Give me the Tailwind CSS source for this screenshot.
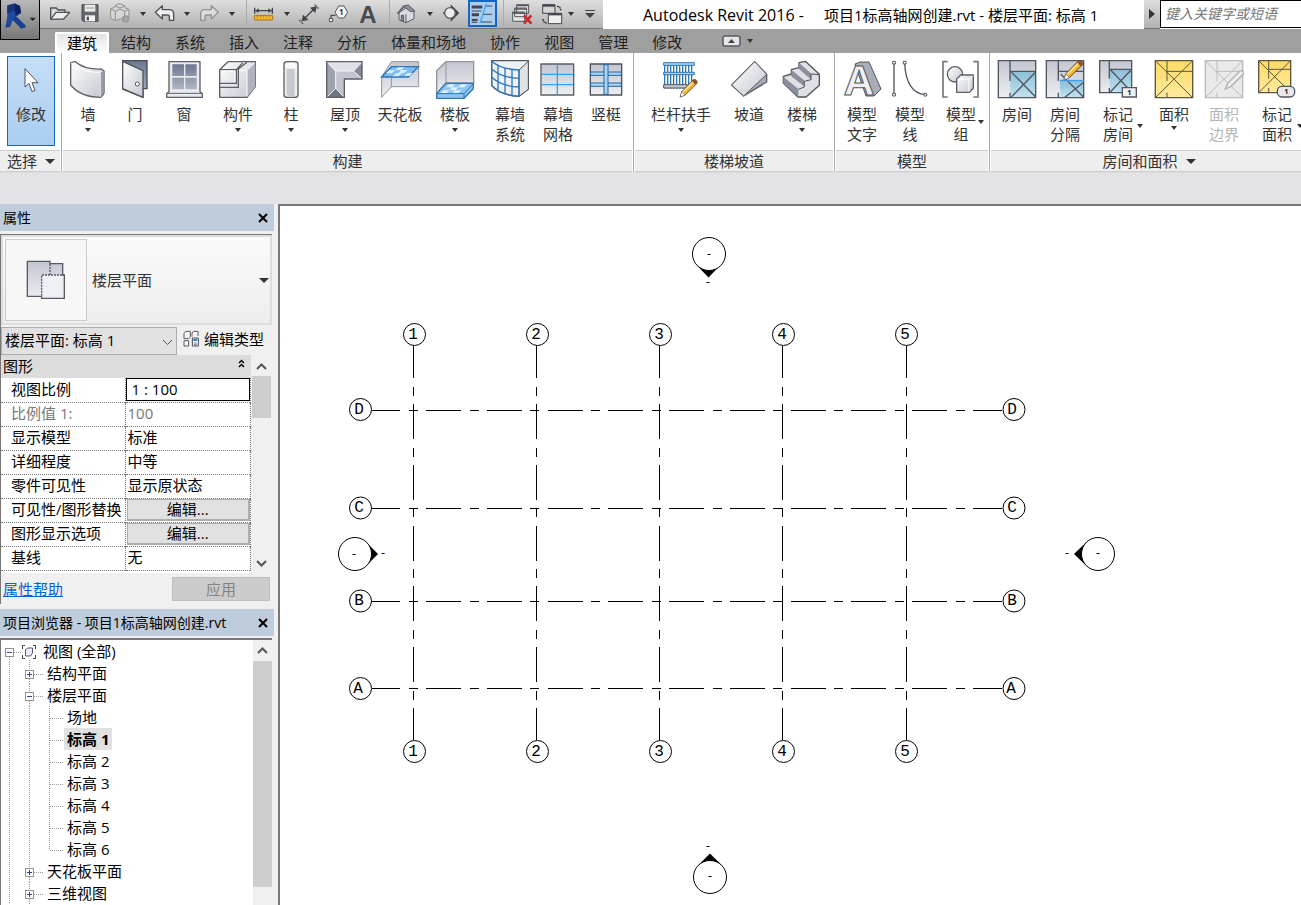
<!DOCTYPE html>
<html lang="zh-CN">

<head>
    <meta charset="UTF-8">
    <meta name="viewport" content="width=device-width, initial-scale=1.0">
    <title>Autodesk Revit 2016 - 项目1标高轴网创建.rvt</title>
    <script src="https://cdn.jsdelivr.net/npm/@tailwindcss/browser@4"></script>
</head>

<body class="flex h-screen flex-col overflow-hidden bg-[#f0f0f0] font-['Open_Sans','Noto_Sans_CJK_SC',sans-serif] text-[15px] leading-5 text-black">
    <!-- shared shapes -->
    <svg class="absolute h-0 w-0">
        <defs>
            <linearGradient id="g" x1="0" y1="0" x2="1" y2="1">
                <stop offset="0" stop-color="#ffffff" />
                <stop offset="1" stop-color="#c4c7d0" />
            </linearGradient>
            <linearGradient id="gd" x1="0" y1="0" x2="0" y2="1">
                <stop offset="0" stop-color="#c3c6d0" />
                <stop offset="1" stop-color="#eceef1" />
            </linearGradient>
            <linearGradient id="gw" x1="0" y1="0" x2="0" y2="1">
                <stop offset="0" stop-color="#6d788f" />
                <stop offset="1" stop-color="#b0b6c4" />
            </linearGradient>
            <linearGradient id="gb" x1="0" y1="0" x2="0" y2="1">
                <stop offset="0" stop-color="#8cbfd9" />
                <stop offset="1" stop-color="#c4e3f0" />
            </linearGradient>
            <linearGradient id="gy" x1="0" y1="0" x2="0" y2="1">
                <stop offset="0" stop-color="#ffdb62" />
                <stop offset="1" stop-color="#ffeaa0" />
            </linearGradient>
            <symbol id="pencil" viewBox="0 0 66 66">
                <path d="M4 62l5-18L46 6q6-5 11 1 6 5 1 11L20 55z" fill="#f5b32d" stroke="#5b4a35" stroke-width="3" />
                <path d="M13 46L48 11" stroke="#ffe58d" stroke-width="5" />
                <path d="M4 62l5-18 11 11z" fill="#fff" stroke="#60656d" stroke-width="2" />
                <path d="M43 9l11 12 5-4q4-6-2-11t-10-1z" fill="#8c5030" />
            </symbol>
            <symbol id="plus" viewBox="0 0 9 9">
                <rect x=".5" y=".5" width="8" height="8" fill="#fff" stroke="#919191" />
                <path d="M2 4.5h5M4.5 2v5" stroke="#2b4a9b" />
            </symbol>
            <symbol id="minus" viewBox="0 0 9 9">
                <rect x=".5" y=".5" width="8" height="8" fill="#fff" stroke="#919191" />
                <path d="M2 4.5h5" stroke="#2b4a9b" />
            </symbol>
            <symbol id="down" viewBox="0 0 6 4">
                <path d="M0 0h6L3 4z" fill="#333" />
            </symbol>
            <symbol id="down-lg" viewBox="0 0 10 5">
                <path d="M0 0h10L5 5z" fill="#333" />
            </symbol>
        </defs>
    </svg>

    <!-- title bar and tabs -->
    <header class="flex h-[53px] shrink-0 bg-[#9f9f9f]">
        <button class="flex h-10 w-10 shrink-0 items-center border border-t-0 border-black bg-linear-to-b from-[#b9b9b9] to-[#777]" aria-label="应用程序菜单">
            <svg class="h-10 w-10" viewBox="0 0 120 120">
                <path d="M20 14L43 8l17 8 3 22-16 12 30 27v6l-13 4-27-28-8 22-15 3 7-38-2-8z" fill="#1b3a86" />
                <path d="M20 14L43 8l2 22-22 8z" fill="#1a3577" />
                <path d="M43 8l17 8 3 22-18 8z" fill="#0c2160" />
                <path d="M23 38l22-8v18l-16 26-12 6z" fill="#214b9f" />
                <path d="M37 59l12-10 28 28v6l-13 4z" fill="#1d3f90" />
                <path d="M90 53h20l-10 10z" fill="#222" />
            </svg>
        </button>
        <div class="flex min-w-0 flex-1 flex-col">
            <div class="flex h-[29px] bg-white">
                <div class="flex h-[29px] w-[563px] shrink-0 border-b border-[#777] bg-linear-to-b from-[#dedede] to-[#b2b2b2] pl-[5px]">
                    <button aria-label="打开"><svg class="h-7 w-[30px]" viewBox="135 0 90 84">
                            <path d="M152 57V24h17l5 6h21v10" fill="#ddd" stroke="#4d5159" stroke-width="4" />
                            <path d="M152 58l16-21h41l-18 20z" fill="#eee" stroke="#4d5159" stroke-width="4" stroke-linejoin="round" />
                        </svg></button>
                    <button aria-label="保存"><svg class="h-7 w-[30px]" viewBox="225 0 90 84">
                            <path d="M246 14h48v50h-44l-4-4z" fill="#636770" stroke="#484b52" stroke-width="3" />
                            <path d="M254 14h32v21h-32z" fill="#e9e9e9" />
                            <path d="M258 24h24" stroke="#777" stroke-width="2" />
                            <path d="M255 46h30v18h-30z" fill="#f1f1f1" />
                            <path d="M260 50h7v11h-7z" fill="#50535b" />
                        </svg></button>
                    <button aria-label="同步"><svg class="h-7 w-8" viewBox="315 0 96 84">
                            <path d="M332 27l12-6 3-6 12-4 14 5 2 7 12 6v24l-12 8-14-5-14 6-15-8z" fill="#d5d5d5" stroke="#909090" stroke-width="3" />
                            <path d="M332 27l14 7 14-7 14 7 13-6M346 34v26M374 34v20M346 18l14 6 14-6" fill="none" stroke="#909090" stroke-width="3" />
                            <circle cx="377" cy="57" r="11" fill="#979797" />
                            <path d="M368 57h18M377 48v18" stroke="#bbb" stroke-width="2" />
                        </svg></button>
                    <button class="flex w-3 items-center justify-center" aria-label="同步选项"><svg class="h-1 w-1.5"><use href="#down" /></svg></button>
                    <button aria-label="放弃"><svg class="h-7 w-8" viewBox="447 0 96 84">
                            <path d="M466 37l21-20v12h23q11 1 11 13v19h-13V50q0-5-6-5h-15v12z" fill="#eee" stroke="#4e525a" stroke-width="4" stroke-linejoin="round" />
                        </svg></button>
                    <button class="flex w-3 items-center justify-center" aria-label="放弃选项"><svg class="h-1 w-1.5"><use href="#down" /></svg></button>
                    <button aria-label="重做"><svg class="h-7 w-[33px]" viewBox="579 0 99 84">
                            <path d="M655 37l-21-20v12h-21q-11 1-11 13v19h13V50q0-5 6-5h13v12z" fill="#ddd" stroke="#929292" stroke-width="4" stroke-linejoin="round" />
                        </svg></button>
                    <button class="flex w-3 items-center justify-center" aria-label="重做选项"><svg class="h-1 w-1.5"><use href="#down" /></svg></button>
                    <div class="ml-2 h-[26px] w-px bg-[#aaa]"></div>
                    <button aria-label="测量"><svg class="h-7 w-8" viewBox="741 0 96 84">
                            <path d="M764 23v18M817 23v18M767 32h47" stroke="#3e424a" stroke-width="4" />
                            <path d="M766 32l10-7v14zM815 32l-10-7v14z" fill="#3e424a" />
                            <rect x="763" y="46" width="55" height="14" rx="2" fill="#f3b62d" stroke="#a5741c" stroke-width="3" />
                            <path d="M772 47v6M781 47v6M790 47v6M799 47v6M808 47v6" stroke="#a5741c" stroke-width="2" />
                        </svg></button>
                    <button class="flex w-4 items-center justify-center" aria-label="测量选项"><svg class="h-1 w-1.5"><use href="#down" /></svg></button>
                    <button aria-label="对齐尺寸标注"><svg class="h-7 w-7" viewBox="885 0 84 84">
                            <path d="M910 59l34-34" stroke="#3e424a" stroke-width="4" />
                            <path d="M905 64l4-20 16 16zM950 19l-4 20-16-16z" fill="#3e424a" />
                            <path d="M898 60l11 11M944 14l13 13" stroke="#3e424a" stroke-width="4" stroke-dasharray="4 2" />
                        </svg></button>
                    <button aria-label="按类别标记"><svg class="h-7 w-[31px]" viewBox="-6 0 93 84">
                            <path d="M18 60V46h14" fill="none" stroke="#50545c" stroke-width="4" />
                            <path d="M13 55h10v10H13z" fill="#eee" stroke="#50545c" stroke-width="3" />
                            <path d="M41 18h16l11 19-11 17H41L30 37z" fill="#f2f2f2" stroke="#50545c" stroke-width="3" />
                            <text x="49" y="45" text-anchor="middle" font-size="24" font-weight="700" fill="#333">1</text>
                        </svg></button>
                    <button class="w-[29px]" aria-label="文字"><svg class="h-7 w-[29px]" viewBox="0 0 29 28">
                            <text x="14" y="23" text-anchor="middle" font-family="Liberation Sans" font-size="24" font-weight="700" fill="#484b50">A</text>
                        </svg></button>
                    <div class="ml-1.5 h-[26px] w-px bg-[#aaa]"></div>
                    <button class="ml-0.5" aria-label="默认三维视图"><svg class="h-7 w-8" viewBox="201 0 96 84">
                            <path d="M225 38v21l21 9 24-12V35l-16-17z" fill="#d9dce2" stroke="#555961" stroke-width="3" />
                            <path d="M220 40l18-22 15-3 20 18-13 2-20-15-15 20z" fill="#8d929c" stroke="#555961" stroke-width="3" stroke-linejoin="round" />
                            <path d="M246 43v25M232 46h7v17h-7z" fill="#888" stroke="#555961" stroke-width="3" />
                        </svg></button>
                    <button class="flex w-3.5 items-center justify-center" aria-label="三维视图选项"><svg class="h-1 w-1.5"><use href="#down" /></svg></button>
                    <button aria-label="剖面"><svg class="h-7 w-7" viewBox="339 0 84 84">
                            <path d="M380 13l26 26-26 26z" fill="#43464d" />
                            <circle cx="378" cy="39" r="16" fill="#ececef" stroke="#555961" stroke-width="4" />
                            <path d="M357 39h6" stroke="#555961" stroke-width="4" />
                        </svg></button>
                    <button class="ml-[3px] h-[27px] w-[29px] border-2 border-[#1467bd] bg-[#aacdf0]" aria-label="细线"><svg class="h-[23px] w-[25px]" viewBox="438 6 75 69">
                            <path d="M443 21h32M443 44h22" stroke="#44474e" stroke-width="9" />
                            <path d="M443 33h29M443 67h17M484 18h20M478 43h26M471 66h33" stroke="#44474e" stroke-width="3" />
                            <path d="M443 60h18" stroke="#44474e" stroke-width="7" />
                            <path d="M487 12l-19 57" stroke="#3fa5f5" stroke-width="4" />
                        </svg></button>
                    <div class="ml-1.5 h-[26px] w-px bg-[#aaa]"></div>
                    <button class="ml-px" aria-label="关闭隐藏窗口"><svg class="h-7 w-8" viewBox="540 0 96 84">
                            <path d="M575 14h36v26h-36zM569 24h36v26h-36zM563 36h36v28h-36z" fill="#e5e5e5" stroke="#54575f" stroke-width="3" />
                            <path d="M563 39h36M569 27h36M575 17h36" stroke="#54575f" stroke-width="4" />
                            <path d="M597 46l22 25M619 46l-22 25" stroke="#ce2b31" stroke-width="8" />
                        </svg></button>
                    <button aria-label="切换窗口"><svg class="h-7 w-7" viewBox="636 0 84 84">
                            <path d="M653 14h37v26h-37z" fill="#d5d5d5" stroke="#44474e" stroke-width="3" />
                            <path d="M653 17h37" stroke="#44474e" stroke-width="6" />
                            <path d="M670 40h40v31h-40z" fill="#eee" stroke="#44474e" stroke-width="3" />
                            <path d="M670 43h40" stroke="#44474e" stroke-width="6" />
                            <path d="M696 19q11 0 11 12M654 57q0 11 11 12" fill="none" stroke="#222" stroke-width="4" stroke-dasharray="5 2" />
                        </svg></button>
                    <button class="flex w-3 items-center justify-center" aria-label="窗口列表"><svg class="h-1 w-1.5"><use href="#down" /></svg></button>
                    <button class="flex w-[26px] items-center justify-center" aria-label="自定义快速访问工具栏"><svg class="h-2.5 w-3" viewBox="0 0 12 10">
                            <path d="M1 1.5h10" stroke="#444" />
                            <path d="M1 4h10L6 9z" fill="#444" />
                        </svg></button>
                </div>
                <h1 class="flex min-w-0 flex-1 items-center gap-5 overflow-hidden pl-10 text-[15px] whitespace-nowrap">
                    <span class="text-base">Autodesk Revit 2016 -</span>
                    <span>项目1标高轴网创建.rvt - 楼层平面: 标高 1</span>
                </h1>
                <button class="flex w-4 shrink-0 items-center justify-center border-b border-[#777] bg-linear-to-b from-[#dedede] to-[#b2b2b2]" aria-label="展开搜索"><svg class="h-2.5 w-1.5" viewBox="0 0 6 10">
                        <path d="M0 0l6 5-6 5z" fill="#333" />
                    </svg></button>
                <input type="text" aria-label="搜索" placeholder="键入关键字或短语" class="h-7 w-[141px] shrink-0 border border-r-0 border-black bg-white pb-0.5 pl-1 text-sm italic outline-none placeholder:text-[#777]">
            </div>
            <nav class="flex h-6 items-end pl-[15px] text-[#222]">
                <a href="#" class="h-[21px] rounded-t-xs border-2 border-b-0 border-white bg-linear-to-b from-[#e4e4e4] to-white px-2.5 leading-[19px] text-black">建筑</a>
                <a href="#" class="h-[21px] px-3 leading-[21px]">结构</a>
                <a href="#" class="h-[21px] px-3 leading-[21px]">系统</a>
                <a href="#" class="h-[21px] px-3 leading-[21px]">插入</a>
                <a href="#" class="h-[21px] px-3 leading-[21px]">注释</a>
                <a href="#" class="h-[21px] px-3 leading-[21px]">分析</a>
                <a href="#" class="h-[21px] px-3 leading-[21px]">体量和场地</a>
                <a href="#" class="h-[21px] px-3 leading-[21px]">协作</a>
                <a href="#" class="h-[21px] px-3 leading-[21px]">视图</a>
                <a href="#" class="h-[21px] px-3 leading-[21px]">管理</a>
                <a href="#" class="h-[21px] px-3 leading-[21px]">修改</a>
                <button class="ml-7 flex h-6 items-center gap-1.5" aria-label="最小化功能区">
                    <svg class="h-3 w-[19px]" viewBox="0 0 19 12">
                        <rect x="1" y="1" width="17" height="10" rx="2" fill="#e6e6ea" stroke="#555a63" stroke-width="1.5" />
                        <path d="M6 8l3.500-4L13 8z" fill="#444" />
                    </svg>
                    <svg class="h-1 w-1.5"><use href="#down" /></svg>
                </button>
            </nav>
        </div>
    </header>

    <!-- ribbon -->
    <section class="flex h-[120px] shrink-0 overflow-hidden border-b border-[#ddd] bg-white text-[#333]">
        <div class="flex w-[62px] shrink-0 flex-col border-r border-[#aaa]">
            <div class="h-[97px] px-[7px] pt-[3px]">
                <button class="flex h-[90px] w-12 flex-col items-center border border-[#1467bd] bg-linear-to-b from-[#c6def6] to-[#a9cdef]">
                    <svg class="mt-1.5 h-9 w-9" viewBox="36 186 108 108">
                        <path d="M72 203v55l12-11 9 25 9-4-9-23h18z" fill="#fff" stroke="#50545c" stroke-width="3" stroke-linejoin="round" />
                    </svg>
                    <span class="mt-[5px]">修改</span>
                </button>
            </div>
            <button class="mr-px flex h-[22px] items-center gap-2 border-y border-[#ccc] bg-[#eee] pl-[7px]">选择<svg class="h-[5px] w-2.5"><use href="#down-lg" /></svg></button>
        </div>

        <div class="flex w-[572px] shrink-0 flex-col border-r border-[#aaa]">
            <div class="flex h-[97px] items-start pt-1.5 pl-0.5">
                <button class="flex w-12 flex-col items-center">
                    <svg class="mb-[5px] size-10" viewBox="204 177 120 120">
                        <path d="M212 189q7-5 14-4 28 24 78 22l8 6v66q-4 10-11 13-60-1-89-37z" fill="url(#g)" stroke="#5b5f68" stroke-width="4" stroke-linejoin="round" />
                        <path d="M214 190q35 28 87 28v72" fill="none" stroke="#fff" stroke-width="3" />
                        <path d="M302 217l9-4v66l-9 11z" fill="#9a9eaa" />
                    </svg>
                    墙
                    <svg class="mt-1 h-1 w-1.5"><use href="#down" /></svg>
                </button>
                <button class="flex w-[46px] flex-col items-center">
                    <svg class="mb-[5px] size-10" viewBox="345 177 120 120">
                        <path d="M368 182h73v84h-12v26l-61-25z" fill="url(#gw)" stroke="#454b58" stroke-width="4" />
                        <path d="M368 184l61 28v80l-61-26z" fill="url(#g)" stroke="#50545c" stroke-width="4" stroke-linejoin="round" />
                        <circle cx="412" cy="252" r="6" fill="#fff" stroke="#555" stroke-width="3" />
                    </svg>
                    门
                </button>
                <button class="flex w-[52px] flex-col items-center">
                    <svg class="mb-[5px] size-10" viewBox="492 177 120 120">
                        <path d="M507 185h93v90l7 6v11H500v-11l7-6z" fill="#e9eaee" stroke="#5b5f68" stroke-width="4" stroke-linejoin="round" />
                        <path d="M500 280h107" stroke="#5b5f68" stroke-width="3" />
                        <path d="M517 193h35v35h-35zM556 193h34v35h-34zM517 233h35v35h-35zM556 233h34v35h-34z" fill="url(#gw)" />
                    </svg>
                    窗
                </button>
                <button class="flex w-14 flex-col items-center">
                    <svg class="mb-[5px] size-10" viewBox="654 177 120 120">
                        <path d="M659 209l25-24h82v75l-25 32h-82z" fill="url(#g)" stroke="#5b5f68" stroke-width="4" stroke-linejoin="round" />
                        <path d="M741 210l25-25v75l-25 32z" fill="#b0b3bd" />
                        <path d="M659 209h50l19-20M709 209v41h-50M659 262h56v-55l26-20" fill="none" stroke="#5b5f68" stroke-width="4" />
                        <path d="M663 213h42v33M741 212v76M719 211h22l22-22" fill="none" stroke="#fff" stroke-width="3" />
                    </svg>
                    构件
                    <svg class="mt-1 h-1 w-1.5"><use href="#down" /></svg>
                </button>
                <button class="flex w-[50px] flex-col items-center">
                    <svg class="mb-[5px] size-10" viewBox="813 177 120 120">
                        <path d="M852 192q0-7 10-7h22q10 0 10 7v92q0 8-10 8h-22q-10 0-10-8z" fill="#eee" stroke="#5b5f68" stroke-width="4" />
                        <path d="M863 206v80M869 206v82M875 206v82M881 206v82" stroke="#c5c8cf" stroke-width="6" />
                        <ellipse cx="873" cy="197" rx="18" ry="9" fill="#f8f8f8" />
                    </svg>
                    柱
                    <svg class="mt-1 h-1 w-1.5"><use href="#down" /></svg>
                </button>
                <button class="flex w-[58px] flex-col items-center">
                    <svg class="mb-[5px] size-10" viewBox="0 177 120 120">
                        <path d="M5 185h106v52H58v55H5z" fill="#dfe1e6" />
                        <path d="M5 185l27 30v50L5 292z" fill="#9ea2ad" />
                        <path d="M32 213h54l25 24H58v55l-26-28z" fill="#c2c5ce" />
                        <path d="M86 213l25-28v52z" fill="#858a97" />
                        <path d="M32 265l26 27H5z" fill="#6f7482" />
                        <path d="M5 185l27 28h54l25-26M86 213l25 24M32 213v52L5 292M32 265l26 27" fill="none" stroke="#f5f5f7" stroke-width="3" />
                        <path d="M5 185h106v52H58v55H5z" fill="none" stroke="#5b5f68" stroke-width="4" />
                    </svg>
                    屋顶
                    <svg class="mt-1 h-1 w-1.5"><use href="#down" /></svg>
                </button>
                <button class="flex w-[52px] flex-col items-center">
                    <svg class="mb-[5px] size-10" viewBox="165 177 120 120">
                        <path d="M170 230l29-45h82v75h-82l-29 32z" fill="url(#gd)" stroke="#92959c" stroke-width="3" />
                        <path d="M199 230v32" stroke="#92959c" stroke-width="3" />
                        <path d="M170 231l30-31h80l-30 31z" fill="#7dbcf1" stroke="#2d76b9" stroke-width="4" />
                        <path d="M193 210h18l-10 10h-18zM229 210h18l-10 10h-18zM220 202h18l-9 8h-18zM212 220h18l-9 9h-18zM247 219h16l-9 9h-16z" fill="#d7edff" />
                    </svg>
                    天花板
                </button>
                <button class="flex w-[58px] flex-col items-center">
                    <svg class="mb-[5px] size-10" viewBox="330 177 120 120">
                        <path d="M335 212l28-27h83v64H363l-28 32z" fill="url(#gd)" stroke="#92959c" stroke-width="4" />
                        <path d="M363 185v64" stroke="#92959c" stroke-width="3" />
                        <path d="M335 281l28-31h82v16l-28 29h-82z" fill="#8fc5f3" stroke="#2d76b9" stroke-width="4" />
                        <path d="M335 281h82l28-30M417 281v14" fill="none" stroke="#2d76b9" stroke-width="3" />
                        <path d="M372 253h18l-8 9h-18zM408 253h18l-8 9h-18zM382 262h18l-9 9h-18zM356 271h17l-8 8h-17zM391 271h18l-9 8h-18z" fill="#e0f1ff" />
                    </svg>
                    楼板
                    <svg class="mt-1 h-1 w-1.5"><use href="#down" /></svg>
                </button>
                <button class="flex w-[52px] flex-col items-center">
                    <svg class="mb-[5px] size-10" viewBox="495 177 120 120">
                        <path d="M500 182h110v85l-28 22q-58-3-82-33z" fill="#eef2f7" stroke="#50545c" stroke-width="4" />
                        <path d="M582 210l28-26v84l-28 21z" fill="#e0e2e6" stroke="#50545c" stroke-width="3" />
                        <path d="M500 184q28 24 82 26v79q-55-3-82-33zM500 207q28 26 82 28M500 231q28 28 82 30M519 196v76M540 204v79M561 208v80" fill="none" stroke="#2d76b9" stroke-width="4" />
                    </svg>
                    <span>幕墙<br>系统</span>
                </button>
                <button class="flex w-11 flex-col items-center">
                    <svg class="mb-[5px] size-10" viewBox="639 177 120 120">
                        <path d="M648 192h98v93h-98z" fill="url(#gd)" stroke="#5b5f68" stroke-width="4" />
                        <path d="M697 194v89M650 223h94M650 254h94" stroke="#3f9eea" stroke-width="4" />
                    </svg>
                    <span>幕墙<br>网格</span>
                </button>
                <button class="flex w-[52px] flex-col items-center">
                    <svg class="mb-[5px] size-10" viewBox="783 177 120 120">
                        <path d="M796 192h94v93h-94z" fill="url(#gd)" stroke="#4d525c" stroke-width="4" />
                        <path d="M797 216h92v10h-92zM797 249h92v10h-92z" fill="#a8d6f7" stroke="#22659f" stroke-width="3" />
                        <path d="M837 194h12v89h-12z" fill="#a8d6f7" stroke="#22659f" stroke-width="3" />
                    </svg>
                    竖梃
                </button>
            </div>
            <div class="mx-px h-[22px] border-y border-[#ccc] bg-[#eee] text-center">构建</div>
        </div>

        <div class="flex w-[201px] shrink-0 flex-col border-r border-[#aaa]">
            <div class="flex h-[97px] items-start pt-1.5 pl-0.5">
                <button class="flex w-[90px] flex-col items-center">
                    <svg class="mb-[5px] size-10" viewBox="93 177 120 120">
                        <path d="M104 190v76M113 190v76M122 190v76M131 190v76M140 190v76M149 190v76M158 190v76M167 190v76M176 190v76M185 190v60" stroke="#2d76b9" stroke-width="4" />
                        <path d="M101 188h92v8h-92zM101 217h92v7h-92z" fill="#a8d6f7" stroke="#2d76b9" stroke-width="3" />
                        <path d="M101 254h72v10h-72z" fill="#c4c7cf" stroke="#50545c" stroke-width="3" />
                        <use href="#pencil" x="147" y="234" width="60" height="62" />
                    </svg>
                    栏杆扶手
                    <svg class="mt-1 h-1 w-1.5"><use href="#down" /></svg>
                </button>
                <button class="flex w-[46px] flex-col items-center">
                    <svg class="mb-[5px] size-10" viewBox="297 177 120 120">
                        <path d="M305 255l69-70 36 38v23l-69 42z" fill="#a5a8b1" stroke="#5b5f68" stroke-width="4" stroke-linejoin="round" />
                        <path d="M305 255l69-70 36 38-69 65z" fill="url(#g)" stroke="#5b5f68" stroke-width="3" stroke-linejoin="round" />
                    </svg>
                    坡道
                </button>
                <button class="flex w-[60px] flex-col items-center">
                    <svg class="mb-[5px] size-10" viewBox="456 177 120 120">
                        <path d="M460 229l24-7v-13l23-6v-15l19-4 42 39v33l-40 35h-24l-44-42z" fill="#dfe1e6" stroke="#50545c" stroke-width="4" stroke-linejoin="round" />
                        <path d="M460 230l45 37v24l-45-42zM484 209l38 32v18l-38-30zM507 188l37 33v18l-37-32z" fill="#8b8f9b" />
                        <path d="M505 268l18-7v-17l20-5v-17l24 2" fill="none" stroke="#50545c" stroke-width="3" />
                    </svg>
                    楼梯
                    <svg class="mt-1 h-1 w-1.5"><use href="#down" /></svg>
                </button>
            </div>
            <div class="mx-px h-[22px] border-y border-[#ccc] bg-[#eee] text-center">楼梯坡道</div>
        </div>

        <div class="flex w-[155px] shrink-0 flex-col border-r border-[#aaa]">
            <div class="flex h-[97px] items-start pt-1.5 pl-[3px]">
                <button class="flex w-12 flex-col items-center">
                    <svg class="mb-[5px] size-10 overflow-visible" viewBox="0 0 40 40">
                        <path d="M13 5l5-2h9l12 27-7 7h-8z" fill="#a9adb8" stroke="#50545c" stroke-linejoin="round" />
                        <text x="17" y="36" text-anchor="middle" font-family="Liberation Sans" font-size="43" font-weight="700" fill="#eef0f3" stroke="#50545c">A</text>
                    </svg>
                    <span>模型<br>文字</span>
                </button>
                <button class="flex w-12 flex-col items-center">
                    <svg class="mb-[5px] size-10" viewBox="780 177 120 120">
                        <path d="M792 189v96M824 189q4 90 62 95" fill="none" stroke="#50545c" stroke-width="4" />
                        <path d="M788 184h8v8h-8zM788 280h8v8h-8zM820 184h8v8h-8zM882 280h8v8h-8z" fill="#fff" stroke="#50545c" stroke-width="3" />
                    </svg>
                    <span>模型<br>线</span>
                </button>
                <button class="relative flex w-[54px] flex-col items-center">
                    <svg class="mb-[5px] size-10" viewBox="930 177 120 120">
                        <path d="M950 185h-14v106h14M1027 185h14v106h-14" fill="none" stroke="#74777f" stroke-width="5" />
                        <circle cx="972" cy="223" r="23" fill="url(#g)" stroke="#5b5f68" stroke-width="4" />
                        <path d="M977 237l12-12h38v40l-12 12h-38z" fill="url(#g)" stroke="#5b5f68" stroke-width="4" stroke-linejoin="round" />
                        <path d="M979 238h35v37M1015 237l10-10" fill="none" stroke="#fff" stroke-width="3" />
                    </svg>
                    <span>模型<br>组</span>
                    <svg class="absolute right-1 bottom-5 h-1 w-1.5"><use href="#down" /></svg>
                </button>
            </div>
            <div class="mx-px h-[22px] border-y border-[#ccc] bg-[#eee] text-center">模型</div>
        </div>

        <div class="flex min-w-0 flex-1 flex-col">
            <div class="flex h-[97px] items-start pt-1.5 pl-[3px]">
                <button class="flex w-12 shrink-0 flex-col items-center">
                    <svg class="mb-[5px] size-10" viewBox="111 177 120 120">
                        <path d="M115 182h112v111H115z" fill="url(#gd)" />
                        <path d="M151 215h76v78h-76z" fill="url(#gb)" />
                        <path d="M115 182h112v111H115zM150 182v61M150 278v14M150 214h77M154 216l73 75M227 216l-73 75" fill="none" stroke="#50565f" stroke-width="4" />
                    </svg>
                    房间
                </button>
                <button class="flex w-12 shrink-0 flex-col items-center">
                    <svg class="mb-[5px] size-10" viewBox="255 177 120 120">
                        <path d="M259 182h112v111H259z" fill="url(#gd)" />
                        <path d="M300 245h71v48h-71z" fill="url(#gb)" />
                        <path d="M259 182h112v111H259zM295 182v61M295 278v14M295 214h76M302 222l69 70M371 247l-58 46" fill="none" stroke="#50565f" stroke-width="4" />
                        <path d="M300 242h71" stroke="#3f9eea" stroke-width="5" />
                        <use href="#pencil" x="308" y="178" width="66" height="66" />
                    </svg>
                    <span>房间<br>分隔</span>
                </button>
                <button class="relative flex w-[58px] shrink-0 flex-col items-center">
                    <svg class="mb-[5px] size-10" viewBox="414 177 120 120">
                        <path d="M419 182h96v96h-96z" fill="url(#gd)" />
                        <path d="M450 209h65v69h-65z" fill="url(#gb)" />
                        <path d="M419 182h96v96h-96zM448 182v54M448 264v14M448 208h67M452 210l63 66M513 210l-62 66" fill="none" stroke="#50565f" stroke-width="4" />
                        <path d="M487 263h42v28h-42z" fill="#f1f1f3" stroke="#50565f" stroke-width="4" />
                        <text x="508" y="285" text-anchor="middle" font-size="22" font-weight="700" fill="#222">1</text>
                    </svg>
                    <span>标记<br>房间</span>
                    <svg class="absolute right-1 bottom-4 h-1 w-1.5"><use href="#down" /></svg>
                </button>
                <button class="flex w-[54px] shrink-0 flex-col items-center">
                    <svg class="mb-[5px] size-10" viewBox="582 177 120 120">
                        <path d="M586 182h112v111H586z" fill="url(#gy)" stroke="#5c5540" stroke-width="4" />
                        <path d="M586 182l112 111M698 182L586 293M621 182v61M621 278v14M621 214h77" fill="none" stroke="#5c5540" stroke-width="3" />
                    </svg>
                    面积
                    <svg class="mt-0.5 h-1 w-1.5"><use href="#down" /></svg>
                </button>
                <button class="flex w-[46px] shrink-0 flex-col items-center text-[#b5b5b5]" disabled>
                    <svg class="mb-[5px] size-10" viewBox="732 177 120 120">
                        <path d="M736 182h112v111H736z" fill="#e9e9e9" stroke="#bbb" stroke-width="4" />
                        <path d="M736 182l112 111M848 182L736 293M771 182v61M771 278v14M771 214h77" fill="none" stroke="#bbb" stroke-width="3" />
                        <path d="M796 267l7-17 37-37q6-3 9 1 4 4 1 8l-37 37z" fill="#eee" stroke="#b0b0b0" stroke-width="4" />
                    </svg>
                    <span>面积<br>边界</span>
                </button>
                <button class="relative flex w-[60px] shrink-0 flex-col items-center">
                    <svg class="mb-[5px] size-10" viewBox="891 177 120 120">
                        <path d="M896 182h96v96h-96z" fill="url(#gy)" stroke="#5c5540" stroke-width="4" />
                        <path d="M896 182l96 96M992 182l-96 96M926 182v54M926 264v14M926 208h66" fill="none" stroke="#5c5540" stroke-width="3" />
                        <rect x="952" y="259" width="52" height="32" rx="14" fill="#e7e8ec" stroke="#50565f" stroke-width="4" />
                        <text x="979" y="283" text-anchor="middle" font-size="22" font-weight="700" fill="#222">1</text>
                    </svg>
                    <span>标记<br>面积</span>
                    <svg class="absolute right-1 bottom-4 h-1 w-1.5"><use href="#down" /></svg>
                </button>
            </div>
            <button class="ml-px flex h-[22px] items-center justify-center gap-2 border-y border-[#ccc] bg-[#eee] pl-1.5">房间和面积<svg class="h-[5px] w-2.5"><use href="#down-lg" /></svg></button>
        </div>
    </section>

    <div class="h-[31px] shrink-0 bg-[#e3e3e6]"></div>

    <main class="flex min-h-0 flex-1">
        <aside class="flex w-[278px] shrink-0 flex-col">
            <!-- properties -->
            <div class="mr-1 flex h-[27px] shrink-0 items-center justify-between bg-[#beccdb] pr-1.5 pl-[3px] text-sm">
                <h2>属性</h2>
                <button aria-label="关闭属性"><svg class="h-2.5 w-2.5" viewBox="0 0 10 10">
                        <path d="M1 1l8 8M9 1L1 9" stroke="#000" stroke-width="2" />
                    </svg></button>
            </div>
            <div class="mt-[3px] mr-1.5 flex h-[370px] shrink-0 flex-col border-t border-l border-[#777]">
                <button class="flex h-[90px] w-full items-center border-2 border-[#ddd] bg-linear-to-b from-[#fafafa] to-[#eee] pl-0.5 text-left text-[#333]">
                    <span class="flex h-[82px] w-[82px] items-center justify-center border border-[#ccc] bg-[#f7f7f7]">
                        <svg class="size-10" viewBox="78 177 120 120">
                            <path d="M82 181h68v7h38v34h5v70h-68v-6H82z" fill="url(#gd)" />
                            <path d="M125 222h68v70h-68z" fill="#eef0f4" />
                            <path d="M125 286H82V181h68v7h38v34h5v70h-68v-6" fill="none" stroke="#555a63" stroke-width="4" />
                            <path d="M125 284v-62h68M150 189v33" fill="none" stroke="#555a63" stroke-width="4" stroke-dasharray="6 3" />
                        </svg>
                    </span>
                    <span class="ml-[5px] flex-1">楼层平面</span>
                    <svg class="mr-px h-[5px] w-2.5"><use href="#down-lg" /></svg>
                </button>
                <div class="flex h-[30px] items-center">
                    <label class="relative mt-0.5 h-7 w-[176px]">
                        <select aria-label="视图实例" class="h-7 w-full appearance-none border border-[#adadad] bg-[#e1e1e1] pb-0.5 pl-[3px]">
                            <option>楼层平面: 标高 1</option>
                        </select>
                        <svg class="pointer-events-none absolute top-3 right-1 h-[7px] w-[11px]" viewBox="0 0 11 7">
                            <path d="M1 1l4.500 4.500L10 1" fill="none" stroke="#555" />
                        </svg>
                    </label>
                    <button class="flex flex-1 items-center gap-1 pb-[3px] pl-[5px]">
                        <svg class="h-[18px] w-[18px]" viewBox="546 388 54 54">
                            <path d="M552 412v-14l5-6h14v16l-5 6h-14zM576 408v-10l4-6h14v14M552 436v-16h14v16z" fill="#f5f5f5" stroke="#555a63" stroke-width="3" />
                            <path d="M577 412h18v24h-18z" fill="#fff" stroke="#444952" stroke-width="3" />
                            <path d="M580 415h12v6h-12z" fill="#2d82d2" />
                            <path d="M581 427h10M581 432h10" stroke="#444" stroke-width="2" />
                        </svg>
                        编辑类型
                    </button>
                </div>
                <div class="flex h-[218px] overflow-hidden">
                    <div class="w-[250px] overflow-hidden bg-white">
                        <div class="flex h-[23px] items-center justify-between bg-[#dcdcdc] pr-1.5 pb-px pl-0.5">
                            图形
                            <svg class="mb-1.5 h-[9px] w-[7px]" viewBox="0 0 7 9">
                                <path d="M1 4l2.500-2.500L6 4M1 8l2.500-2.500L6 8" fill="none" stroke="#000" stroke-width="1.500" />
                            </svg>
                        </div>
                        <table class="w-full table-fixed border-collapse">
                            <tr class="h-6 border-b border-dotted border-[#777]">
                                <th scope="row" class="w-[124px] border-r border-dotted border-[#777] pb-0.5 pl-2.5 text-left font-normal whitespace-nowrap">视图比例</th>
                                <td class="border-r border-dotted border-[#777]"><input type="text" value="1 : 100" aria-label="视图比例" class="block h-[23px] w-full border border-black pb-px pl-[5px] outline-none"></td>
                            </tr>
                            <tr class="h-6 border-b border-dotted border-[#777] text-[#777]">
                                <th scope="row" class="border-r border-dotted border-[#777] pb-0.5 pl-2.5 text-left font-normal whitespace-nowrap">比例值 1:</th>
                                <td class="border-r border-dotted border-[#777] pb-0.5 pl-0.5">100</td>
                            </tr>
                            <tr class="h-6 border-b border-dotted border-[#777]">
                                <th scope="row" class="border-r border-dotted border-[#777] pb-0.5 pl-2.5 text-left font-normal whitespace-nowrap">显示模型</th>
                                <td class="border-r border-dotted border-[#777] pb-0.5 pl-0.5">标准</td>
                            </tr>
                            <tr class="h-6 border-b border-dotted border-[#777]">
                                <th scope="row" class="border-r border-dotted border-[#777] pb-0.5 pl-2.5 text-left font-normal whitespace-nowrap">详细程度</th>
                                <td class="border-r border-dotted border-[#777] pb-0.5 pl-0.5">中等</td>
                            </tr>
                            <tr class="h-6 border-b border-dotted border-[#777]">
                                <th scope="row" class="border-r border-dotted border-[#777] pb-0.5 pl-2.5 text-left font-normal whitespace-nowrap">零件可见性</th>
                                <td class="border-r border-dotted border-[#777] pb-0.5 pl-0.5">显示原状态</td>
                            </tr>
                            <tr class="h-6 border-b border-dotted border-[#777]">
                                <th scope="row" class="border-r border-dotted border-[#777] pb-0.5 pl-2.5 text-left font-normal whitespace-nowrap">可见性/图形替换</th>
                                <td class="border-r border-dotted border-[#777] pl-px"><button class="block h-[22px] w-full border border-r-2 border-b-2 border-[#adadad] bg-[#e1e1e1] leading-[19px]">编辑...</button></td>
                            </tr>
                            <tr class="h-6 border-b border-dotted border-[#777]">
                                <th scope="row" class="border-r border-dotted border-[#777] pb-0.5 pl-2.5 text-left font-normal whitespace-nowrap">图形显示选项</th>
                                <td class="border-r border-dotted border-[#777] pl-px"><button class="block h-[22px] w-full border border-r-2 border-b-2 border-[#adadad] bg-[#e1e1e1] leading-[19px]">编辑...</button></td>
                            </tr>
                            <tr class="h-6 border-b border-dotted border-[#777]">
                                <th scope="row" class="border-r border-dotted border-[#777] pb-0.5 pl-2.5 text-left font-normal whitespace-nowrap">基线</th>
                                <td class="border-r border-dotted border-[#777] pb-0.5 pl-0.5">无</td>
                            </tr>
                        </table>
                    </div>
                    <div class="ml-px flex w-[19px] flex-col items-center justify-between">
                        <svg class="mt-2 h-[7px] w-[11px]" viewBox="0 0 11 7">
                            <path d="M1 6l4.500-4.500L10 6" fill="none" stroke="#555" stroke-width="2" />
                        </svg>
                        <div class="mt-1.5 mb-auto h-[42px] w-[19px] bg-[#cdcdcd]"></div>
                        <svg class="mb-1.5 h-[7px] w-[11px]" viewBox="0 0 11 7">
                            <path d="M1 1l4.500 4.500L10 1" fill="none" stroke="#555" stroke-width="2" />
                        </svg>
                    </div>
                </div>
                <div class="flex flex-1 items-center justify-between pr-0.5 pl-0.5">
                    <a href="#" class="text-[#0066cc] underline">属性帮助</a>
                    <button class="h-6 w-[98px] border border-[#bfbfbf] bg-[#ccc] leading-[22px] text-[#838383]" disabled>应用</button>
                </div>
            </div>

            <!-- project browser -->
            <div class="mt-[5px] mr-1 flex h-[27px] shrink-0 items-center justify-between bg-[#beccdb] pr-1.5 pl-[3px] text-sm">
                <h2>项目浏览器 - 项目1标高轴网创建.rvt</h2>
                <button aria-label="关闭项目浏览器"><svg class="h-2.5 w-2.5" viewBox="0 0 10 10">
                        <path d="M1 1l8 8M9 1L1 9" stroke="#000" stroke-width="2" />
                    </svg></button>
            </div>
            <div class="mt-0.5 mr-1.5 flex min-h-0 flex-1 overflow-hidden border-t-2 border-l border-[#777] bg-white">
                <ul class="flex-1">
                    <li class="flex h-[22px] items-center">
                        <svg class="h-[22px] w-[42px]" viewBox="1 0 42 22">
                            <path d="M9.500 17v5M14 12.500h7M29.500 20v2" stroke="#999" stroke-dasharray="1 1" />
                            <use href="#minus" x="5" y="8" width="9" height="9" />
                            <path d="M25 5.500h-2.500V9M33 5.500h2.500V9M25 18.500h-2.500V15M33 18.500h2.500V15" fill="none" stroke="#444" />
                            <path d="M25.500 10l2-2h5v5l-2 3h-5z" fill="#eef" stroke="#555a77" />
                        </svg>
                        视图 (全部)
                    </li>
                    <li class="flex h-[22px] items-center">
                        <svg class="h-[22px] w-[46px]" viewBox="1 0 46 22">
                            <path d="M9.500 0v22M29.500 0v8M29.500 17v5M34 12.500h10" stroke="#999" stroke-dasharray="1 1" />
                            <use href="#plus" x="25" y="8" width="9" height="9" />
                        </svg>
                        结构平面
                    </li>
                    <li class="flex h-[22px] items-center">
                        <svg class="h-[22px] w-[46px]" viewBox="1 0 46 22">
                            <path d="M9.500 0v22M29.500 0v8M29.500 17v5M34 12.500h10" stroke="#999" stroke-dasharray="1 1" />
                            <use href="#minus" x="25" y="8" width="9" height="9" />
                        </svg>
                        楼层平面
                    </li>
                    <li class="flex h-[22px] items-center">
                        <svg class="h-[22px] w-[63px]" viewBox="1 0 63 22">
                            <path d="M9.500 0v22M29.500 0v22M49.500 0v22M50 12.500h14" stroke="#999" stroke-dasharray="1 1" />
                        </svg>
                        <span class="px-[3px]">场地</span>
                    </li>
                    <li class="flex h-[22px] items-center">
                        <svg class="h-[22px] w-[63px]" viewBox="1 0 63 22">
                            <path d="M9.500 0v22M29.500 0v22M49.500 0v22M50 12.500h14" stroke="#999" stroke-dasharray="1 1" />
                        </svg>
                        <strong class="bg-[#e1e1e1] px-[3px] leading-[22px]">标高 1</strong>
                    </li>
                    <li class="flex h-[22px] items-center">
                        <svg class="h-[22px] w-[63px]" viewBox="1 0 63 22">
                            <path d="M9.500 0v22M29.500 0v22M49.500 0v22M50 12.500h14" stroke="#999" stroke-dasharray="1 1" />
                        </svg>
                        <span class="px-[3px]">标高 2</span>
                    </li>
                    <li class="flex h-[22px] items-center">
                        <svg class="h-[22px] w-[63px]" viewBox="1 0 63 22">
                            <path d="M9.500 0v22M29.500 0v22M49.500 0v22M50 12.500h14" stroke="#999" stroke-dasharray="1 1" />
                        </svg>
                        <span class="px-[3px]">标高 3</span>
                    </li>
                    <li class="flex h-[22px] items-center">
                        <svg class="h-[22px] w-[63px]" viewBox="1 0 63 22">
                            <path d="M9.500 0v22M29.500 0v22M49.500 0v22M50 12.500h14" stroke="#999" stroke-dasharray="1 1" />
                        </svg>
                        <span class="px-[3px]">标高 4</span>
                    </li>
                    <li class="flex h-[22px] items-center">
                        <svg class="h-[22px] w-[63px]" viewBox="1 0 63 22">
                            <path d="M9.500 0v22M29.500 0v22M49.500 0v22M50 12.500h14" stroke="#999" stroke-dasharray="1 1" />
                        </svg>
                        <span class="px-[3px]">标高 5</span>
                    </li>
                    <li class="flex h-[22px] items-center">
                        <svg class="h-[22px] w-[63px]" viewBox="1 0 63 22">
                            <path d="M9.500 0v22M29.500 0v22M49.500 0v12M50 12.500h14" stroke="#999" stroke-dasharray="1 1" />
                        </svg>
                        <span class="px-[3px]">标高 6</span>
                    </li>
                    <li class="flex h-[22px] items-center">
                        <svg class="h-[22px] w-[46px]" viewBox="1 0 46 22">
                            <path d="M9.500 0v22M29.500 0v8M29.500 17v5M34 12.500h10" stroke="#999" stroke-dasharray="1 1" />
                            <use href="#plus" x="25" y="8" width="9" height="9" />
                        </svg>
                        天花板平面
                    </li>
                    <li class="flex h-[22px] items-center">
                        <svg class="h-[22px] w-[46px]" viewBox="1 0 46 22">
                            <path d="M9.500 0v22M29.500 0v8M29.500 17v5M34 12.500h10" stroke="#999" stroke-dasharray="1 1" />
                            <use href="#plus" x="25" y="8" width="9" height="9" />
                        </svg>
                        三维视图
                    </li>
                </ul>
                <div class="flex w-[19px] flex-col items-center bg-[#f0f0f0]">
                    <svg class="mt-[7px] h-[7px] w-[11px] shrink-0" viewBox="0 0 11 7">
                        <path d="M1 6l4.500-4.500L10 6" fill="none" stroke="#555" stroke-width="2" />
                    </svg>
                    <div class="mt-[7px] mb-[18px] w-full flex-1 bg-[#cdcdcd]"></div>
                </div>
            </div>
        </aside>

        <!-- drawing area -->
        <section class="min-w-0 flex-1 overflow-hidden border-t-2 border-l-2 border-[#777] bg-white">
            <svg class="h-full w-full">
                <g transform="translate(-280 -206)">
                    <g stroke="#000" stroke-width="1" shape-rendering="crispEdges">
                        <g stroke-dasharray="35 8.500 9 8.250" stroke-dashoffset="2.750">
                            <path d="M413.500 346v394" />
                            <path d="M536.500 346v394" />
                            <path d="M659.500 346v394" />
                            <path d="M782.500 346v394" />
                            <path d="M906.500 346v394" />
                        </g>
                        <g stroke-dasharray="35 8.500 9 8.250" stroke-dashoffset="6.750">
                            <path d="M372 410.500h630" />
                            <path d="M372 508.500h630" />
                            <path d="M372 601.500h630" />
                            <path d="M372 688.500h630" />
                        </g>
                    </g>
                    <g fill="none" stroke="#000">
                        <circle cx="414.500" cy="334.500" r="11" />
                        <circle cx="537.500" cy="334.500" r="11" />
                        <circle cx="660.500" cy="334.500" r="11" />
                        <circle cx="783.500" cy="334.500" r="11" />
                        <circle cx="906.500" cy="334.500" r="11" />
                        <circle cx="414.500" cy="751.500" r="11" />
                        <circle cx="537.500" cy="751.500" r="11" />
                        <circle cx="660.500" cy="751.500" r="11" />
                        <circle cx="783.500" cy="751.500" r="11" />
                        <circle cx="906.500" cy="751.500" r="11" />
                        <circle cx="360.500" cy="409.500" r="11" />
                        <circle cx="360.500" cy="508" r="11" />
                        <circle cx="360.500" cy="601" r="11" />
                        <circle cx="360.500" cy="688.500" r="11" />
                        <circle cx="1014" cy="409.500" r="11" />
                        <circle cx="1014" cy="508" r="11" />
                        <circle cx="1014" cy="601" r="11" />
                        <circle cx="1014" cy="688.500" r="11" />
                    </g>
                    <g font-family="Liberation Mono" font-size="16" text-anchor="middle">
                        <text x="413" y="339">1</text>
                        <text x="536" y="339">2</text>
                        <text x="659" y="339">3</text>
                        <text x="782" y="339">4</text>
                        <text x="905" y="339">5</text>
                        <text x="413" y="756">1</text>
                        <text x="536" y="756">2</text>
                        <text x="659" y="756">3</text>
                        <text x="782" y="756">4</text>
                        <text x="905" y="756">5</text>
                        <text x="359" y="414">D</text>
                        <text x="359" y="512">C</text>
                        <text x="359" y="605">B</text>
                        <text x="358" y="693">A</text>
                        <text x="1012" y="414">D</text>
                        <text x="1012" y="512">C</text>
                        <text x="1012" y="605">B</text>
                        <text x="1011" y="693">A</text>
                    </g>
                    <!-- elevation marks -->
                    <path d="M697 265.500l11.500 12 11.500-12z" />
                    <path d="M366.500 542.500l11.500 11.500-11.500 11.500z" />
                    <path d="M1086 542.500l-12 11.500 12 11.500z" />
                    <path d="M698 865.500l12-12 12 12z" />
                    <g fill="#fff" stroke="#000">
                        <circle cx="709" cy="254" r="16.500" />
                        <circle cx="355" cy="554" r="16.500" />
                        <circle cx="1098" cy="554" r="16.500" />
                        <circle cx="710" cy="877" r="16.500" />
                    </g>
                    <g font-family="Liberation Serif" font-size="12" text-anchor="middle">
                        <text x="709" y="258">-</text>
                        <text x="708" y="286">-</text>
                        <text x="354" y="558">-</text>
                        <text x="383" y="557">-</text>
                        <text x="1098" y="557">-</text>
                        <text x="1067" y="557">-</text>
                        <text x="710" y="880">-</text>
                        <text x="708" y="850">-</text>
                    </g>
                </g>
            </svg>
        </section>
    </main>
</body>

</html>
